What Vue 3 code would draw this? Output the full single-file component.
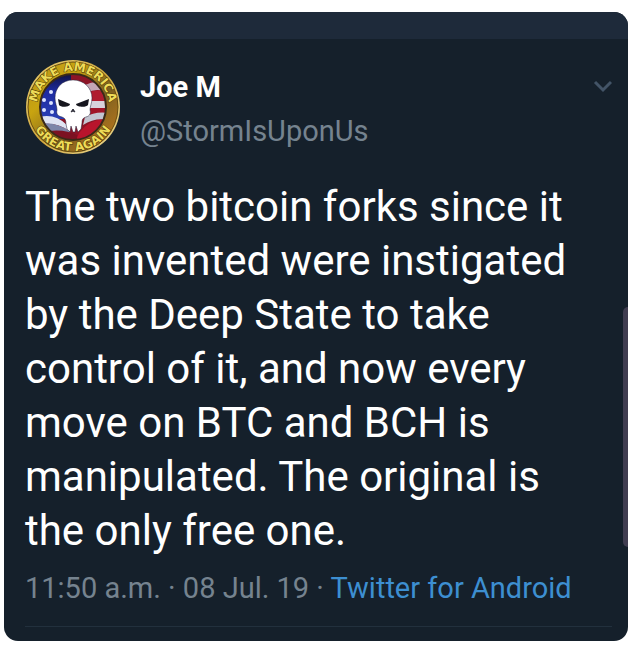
<template>
  <main class="page">
    <article class="tweet-card">
      <div class="top-bar"></div>

      <div class="tweet-content">
        <header class="tweet-header">
          <svg class="avatar" viewBox="0 0 96 96" role="img" aria-label="Joe M">
            <defs>
              <linearGradient id="gold" x1="0" y1="0" x2="1" y2="1">
                <stop offset="0" stop-color="#b8941c" />
                <stop offset="0.3" stop-color="#c8a410" />
                <stop offset="0.6" stop-color="#7c6020" />
                <stop offset="1" stop-color="#c87c1c" />
              </linearGradient>
              <linearGradient id="rim" x1="0" y1="0" x2="1" y2="1">
                <stop offset="0" stop-color="#e6cf78" />
                <stop offset="0.5" stop-color="#d2a83c" />
                <stop offset="1" stop-color="#eedd9a" />
              </linearGradient>
              <linearGradient id="blue" x1="0" y1="0" x2="0" y2="1">
                <stop offset="0" stop-color="#10123c" />
                <stop offset="0.4" stop-color="#1d2ba0" />
                <stop offset="1" stop-color="#2a3fb4" />
              </linearGradient>
              <clipPath id="inner">
                <circle cx="48" cy="48" r="33" />
              </clipPath>
              <path id="arc-top" d="M12 48 A36 36 0 0 1 84 48" />
              <path id="arc-bottom" d="M4 48 A44 44 0 0 0 92 48" />
            </defs>

            <circle cx="48" cy="48" r="47" fill="url(#rim)" />
            <circle cx="48" cy="48" r="45" fill="url(#gold)" stroke="#6a4e10" stroke-width="1" />

            <g clip-path="url(#inner)">
              <rect x="14" y="14" width="68" height="68" fill="#8c1426" />
              <path d="M14 14 H46 V60 H14 Z" fill="url(#blue)" />
              <path d="M60 26 Q72 20 84 26 V34 Q72 28 62 34 Z" fill="#c4a6b4" />
              <path d="M62 34 Q72 29 84 34 V42 H62 Z" fill="#b01c30" />
              <path d="M62 42 H84 V49 H62 Z" fill="#d8d2dc" />
              <path d="M62 49 H84 V55 H62 Z" fill="#a01428" />
              <path d="M60 58 Q70 52 84 54 V61 Q70 58 58 66 Z" fill="#c2c4d0" />
              <path d="M54 74 Q66 58 84 61 V84 H50 Z" fill="#b8142c" />
              <path d="M14 58 Q30 54 42 66 L44 72 Q30 62 14 66 Z" fill="#dfe4f2" />
              <path d="M14 65 Q30 62 44 72 L46 78 Q32 70 18 74 Z" fill="#7d86a8" />
              <path d="M24 72 Q40 70 52 76 V84 H24 Z" fill="#7c1222" />
              <g fill="#dce4ff">
                <circle cx="26" cy="33" r="2" />
                <circle cx="19" cy="41" r="2" />
                <circle cx="26" cy="44" r="2" />
                <circle cx="19" cy="51" r="2" />
                <circle cx="27" cy="53" r="2" />
              </g>
            </g>
            <circle cx="48" cy="48" r="33" fill="none" stroke="#3a2a18" stroke-width="2" />

            <path
              fill="#fff"
              stroke="#20203a"
              stroke-width="0.5"
              d="M48 21 C37 21 30 29 30 39 C30 44 32 47 32 51 C31 55 33 57 37 58 C40 59 41 61 41 65 L42 70 L45 73 L46 67 L48 73 H50 L51 67 L53 73 L56 70 L57 64 C57 60 58 59 61 58 C65 57 66 54 65 51 C65 47 67 44 67 39 C67 29 59 21 48 21 Z"
            />
            <path d="M33 40 L45 45 C45 48 36 49 34 46 Z" fill="#16161e" />
            <path d="M64 40 L51 45 C51 48 61 49 63 46 Z" fill="#16161e" />
            <path d="M48 50 L50 53 L48 52 L46 53 Z" fill="#30303c" stroke="#30303c" />

            <text class="seal-text">
              <textPath href="#arc-top" startOffset="50%" text-anchor="middle">MAKE AMERICA</textPath>
            </text>
            <text class="seal-text">
              <textPath href="#arc-bottom" startOffset="50%" text-anchor="middle">GREAT AGAIN</textPath>
            </text>
          </svg>

          <div class="author">
            <div class="author-name">Joe M</div>
            <div class="author-handle">@StormIsUponUs</div>
          </div>

          <button class="menu-button" type="button" aria-label="More">
            <svg viewBox="0 0 20 14" width="20" height="14">
              <path d="M3 3 L11 11 L19 3" fill="none" stroke="#435467" stroke-width="3" />
            </svg>
          </button>
        </header>

        <p class="tweet-text">{{ tweet.text }}</p>

        <div class="tweet-meta">
          <span>{{ tweet.time }} · {{ tweet.date }} · </span>
          <a href="#">{{ tweet.source }}</a>
        </div>
      </div>

      <div class="scroll-thumb"></div>
    </article>
  </main>
</template>

<script setup>
const tweet = {
  text: 'The two bitcoin forks since it was invented were instigated by the Deep State to take control of it, and now every move on BTC and BCH is manipulated. The original is the only free one.',
  time: '11:50 a.m.',
  date: '08 Jul. 19',
  source: 'Twitter for Android'
}
</script>

<style>
body {
  margin: 0;
  background: #fff;
}
</style>

<style scoped>
.page {
  padding: 12px 6px 10px 4px;
  font-family: Roboto, "Liberation Sans", sans-serif;
}

.tweet-card {
  position: relative;
  overflow: hidden;
  background: #15202b;
  border-radius: 14px;
}

.top-bar {
  height: 27px;
  background: #1e2a3a;
}

.tweet-content {
  padding: 20px 16px 14px 21px;
}

.tweet-header {
  display: flex;
  align-items: flex-start;
  margin-bottom: 25px;
}

.avatar {
  flex: none;
  width: 96px;
  height: 96px;
}

.seal-text {
  font-family: "DejaVu Sans", sans-serif;
  font-size: 12px;
  font-weight: bold;
  fill: #eedc58;
  stroke: #4a3808;
  stroke-width: 1px;
  paint-order: stroke;
}

.author {
  flex: 1;
  padding: 6px 0 0 19px;
}

.author-name {
  color: #fff;
  font-size: 29px;
  font-weight: 700;
  line-height: 44px;
}

.author-handle {
  color: #75838f;
  font-size: 29px;
  line-height: 44px;
}

.menu-button {
  display: flex;
  margin-top: 20px;
  padding: 0;
  border: 0;
  background: none;
  cursor: pointer;
}

.tweet-text {
  margin: 0 0 8px;
  padding-right: 20px;
  color: #fff;
  font-size: 42px;
  line-height: 54px;
}

.tweet-meta {
  padding-bottom: 16px;
  border-bottom: 1px solid #22303d;
  color: #75838f;
  font-size: 29px;
  line-height: 44px;
}

.tweet-meta a {
  color: #3d8fd1;
  text-decoration: none;
}

.scroll-thumb {
  position: absolute;
  top: 295px;
  right: 0;
  width: 5px;
  height: 240px;
  background: #403d50;
  border-radius: 5px 0 0 5px;
}
</style>
